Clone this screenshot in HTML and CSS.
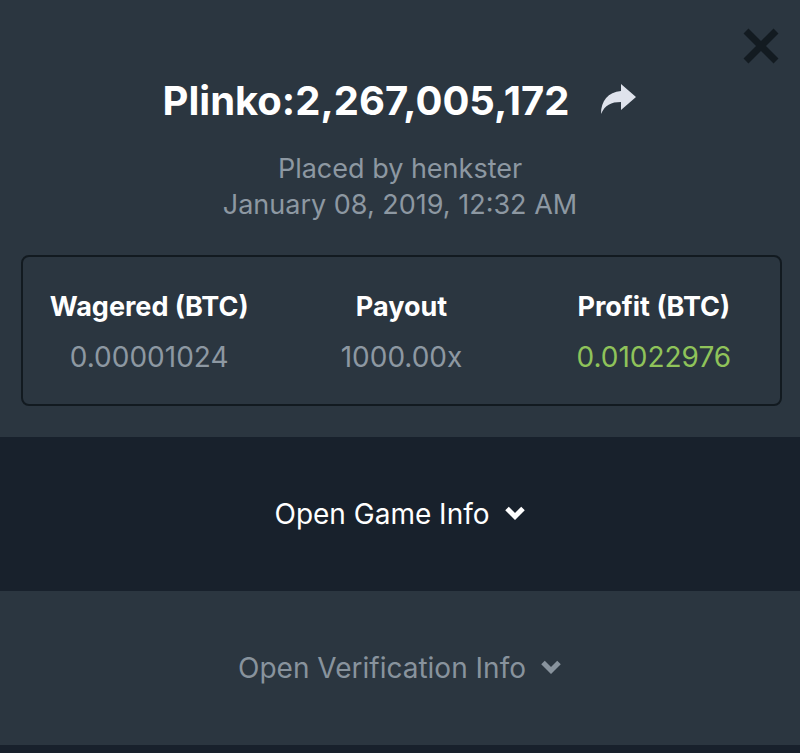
FILE: index.html
```html
<!DOCTYPE html>
<html lang="en">
<head>
    <meta charset="UTF-8">
    <meta name="viewport" content="width=device-width, initial-scale=1.0">
    <title>Bet details</title>
    <link rel="stylesheet" href="styles.css">
</head>
<body>
    <div id="bet-modal">
        <button class="close-btn" aria-label="Close">
            <svg width="38" height="36" viewBox="0 0 38 36"><path d="M4 3 L34 33 M34 3 L4 33" stroke="#131b21" stroke-width="7" fill="none"/></svg>
        </button>
        <div class="bet-header">
            <h1 class="bet-title">Plinko:2,267,005,172
                <svg class="share-icon" width="38" height="34" viewBox="0 0 38 34"><path d="M22 2 L37 15 L22 28 L22 20 C12 20 6 23 2 32 C2 19 9 10 22 9 Z" fill="#dfe3ec"/></svg>
            </h1>
            <div class="bet-meta">Placed by henkster</div>
            <div class="bet-meta">January 08, 2019, 12:32 AM</div>
        </div>
        <div class="bet-stats">
            <div class="stat">
                <div class="stat-label">Wagered (BTC)</div>
                <div class="stat-value">0.00001024</div>
            </div>
            <div class="stat">
                <div class="stat-label">Payout</div>
                <div class="stat-value">1000.00x</div>
            </div>
            <div class="stat">
                <div class="stat-label">Profit (BTC)</div>
                <div class="stat-value positive">0.01022976</div>
            </div>
        </div>
        <div class="info-toggle game-info">
            Open Game Info
            <svg class="chevron" width="22" height="16" viewBox="0 0 22 16"><path d="M3 3.5 L11 11.5 L19 3.5" stroke="currentColor" stroke-width="5" fill="none"/></svg>
        </div>
        <div class="info-toggle verify-info">
            Open Verification Info
            <svg class="chevron" width="22" height="16" viewBox="0 0 22 16"><path d="M3 3.5 L11 11.5 L19 3.5" stroke="currentColor" stroke-width="5" fill="none"/></svg>
        </div>
        <div class="footer-strip"></div>
    </div>
</body>
</html>
```

FILE: styles.css
```css
body {
    font-family: Inter, Lato, sans-serif;
    margin: 0;
    padding: 0;
    background-color: #2b3640;
    height: 753px;
    overflow: hidden;
}
#bet-modal {
    position: relative;
    display: flex;
    flex-direction: column;
    height: 753px;
    background-color: #2b3640;
}
.close-btn {
    position: absolute; /* sits over the header */
    top: 28px;
    right: 20px;
    background: none;
    border: none;
    padding: 0;
    cursor: pointer;
}
.bet-header {
    padding-top: 76px;
    text-align: center;
}
.bet-title {
    margin: 0 0 25px 0;
    color: #fff;
    font-size: 40px;
    font-weight: 700;
    line-height: 50px;
    display: flex;
    justify-content: center;
    align-items: center;
    gap: 30px;
}
.share-icon {
    margin-top: -4px;
}
.bet-meta {
    color: #8d98a2;
    font-size: 27px;
    line-height: 36px;
}
.bet-stats {
    margin: 32px 18px 0 21px;
    border: 2px solid #121a20;
    border-radius: 8px;
    display: grid;
    grid-template-columns: 1fr 1fr 1fr;
    padding: 33px 0 30px 0;
    text-align: center;
}
.stat-label {
    color: #fff;
    font-size: 27px;
    font-weight: 700;
    line-height: 34px;
}
.stat-value {
    color: #8d98a2;
    font-size: 28px;
    line-height: 34px;
    margin-top: 16px;
}
.stat-value.positive {
    color: #8fc35a;
}
.info-toggle {
    height: 154px;
    display: flex;
    justify-content: center;
    align-items: center;
    gap: 14px;
    font-size: 28px;
}
.chevron {
    margin-top: -2px;
}
.game-info {
    margin-top: 31px;
    background-color: #18212c;
    color: #fff;
}
.verify-info {
    color: #88939d;
}
.footer-strip {
    flex-grow: 1;
    background-color: #18212c;
}
```
